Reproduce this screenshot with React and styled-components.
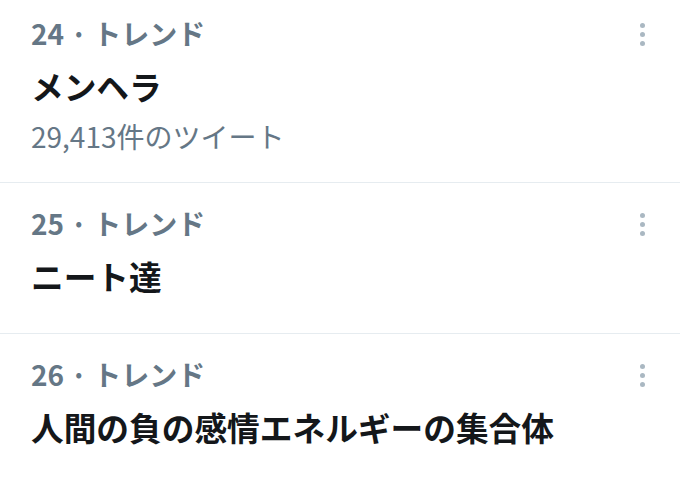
import React from "react";
import styled, { createGlobalStyle } from "styled-components";

const GlobalStyle = createGlobalStyle`
html, body {
    margin: 0;
    padding: 0;
    background: #ffffff;
    overflow: hidden;
}
body {
    font-family: "Noto Sans CJK JP", "Noto Sans", sans-serif;
    -webkit-font-smoothing: antialiased;
}
`;

const TrendList = styled.ul`
list-style: none;
margin: -7px 0 0 0;
padding: 0;
width: 680px;
`;

const TrendItem = styled.li`
display: flex;
align-items: flex-start;
padding: 17px 0 ${props => props.padBottom}px 31px;
border-bottom: 1px solid #e6ecf0;
`;

const TrendBody = styled.div`
flex: 1;
display: flex;
flex-direction: column;
`;

const TrendMeta = styled.div`
color: #657786;
font-size: 28px;
font-weight: 700;
line-height: 46px;
`;

const TrendName = styled.div`
color: #14171a;
font-size: 32.7px;
font-weight: 700;
line-height: 46px;
margin-top: 7px;
`;

const TweetCount = styled.div`
color: #657786;
font-size: 28px;
font-weight: 400;
line-height: 46px;
margin-top: 4px;
`;

const MoreButton = styled.div`
width: 20px;
display: flex;
flex-direction: column;
align-items: center;
gap: 4px;
margin: 13px 28px 0 0;
span {
    width: 5px;
    height: 5px;
    border-radius: 50%;
    background: #aab8c2;
}
`;

const trends = [
    { rank: 24, name: "メンヘラ", count: "29,413件のツイート", padBottom: 23 },
    { rank: 25, name: "ニート達", padBottom: 34 },
    { rank: 26, name: "人間の負の感情エネルギーの集合体", padBottom: 34 },
];

const App = () => {
    return (
        <>
            <GlobalStyle />
            <TrendList>
                {trends.map(t => (
                    <TrendItem key={t.rank} padBottom={t.padBottom}>
                        <TrendBody>
                            <TrendMeta>{t.rank} · トレンド</TrendMeta>
                            <TrendName>{t.name}</TrendName>
                            {t.count && <TweetCount>{t.count}</TweetCount>}
                        </TrendBody>
                        <MoreButton>
                            <span />
                            <span />
                            <span />
                        </MoreButton>
                    </TrendItem>
                ))}
            </TrendList>
        </>
    );
};

export default App;
